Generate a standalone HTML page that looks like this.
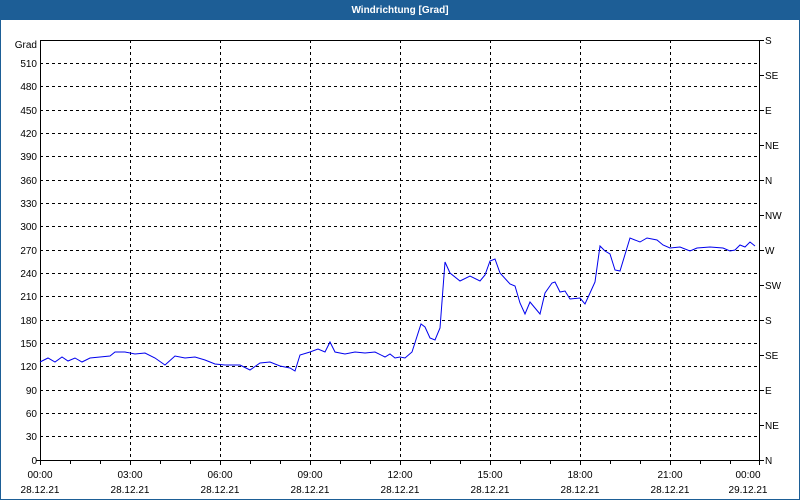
<!DOCTYPE html>
<html><head><meta charset="utf-8"><style>
html,body{margin:0;padding:0;width:800px;height:500px;overflow:hidden;background:#fff}
svg{display:block}
text{font-family:"Liberation Sans",sans-serif;font-size:10px;fill:#000}
</style></head><body>
<svg width="800" height="500" xmlns="http://www.w3.org/2000/svg">
<rect x="0" y="0" width="800" height="500" fill="#1d5e96"/>
<rect x="1" y="20" width="798" height="479" fill="#fff"/>
<text x="400" y="13" text-anchor="middle" style="font-weight:bold;fill:#fff;font-size:10px">Windrichtung [Grad]</text>
<g stroke="#000" stroke-dasharray="3,3" stroke-width="1">
<line x1="40" y1="63.5" x2="760" y2="63.5"/><line x1="40" y1="86.5" x2="760" y2="86.5"/><line x1="40" y1="110.5" x2="760" y2="110.5"/><line x1="40" y1="133.5" x2="760" y2="133.5"/><line x1="40" y1="156.5" x2="760" y2="156.5"/><line x1="40" y1="180.5" x2="760" y2="180.5"/><line x1="40" y1="203.5" x2="760" y2="203.5"/><line x1="40" y1="226.5" x2="760" y2="226.5"/><line x1="40" y1="250.5" x2="760" y2="250.5"/><line x1="40" y1="273.5" x2="760" y2="273.5"/><line x1="40" y1="296.5" x2="760" y2="296.5"/><line x1="40" y1="320.5" x2="760" y2="320.5"/><line x1="40" y1="343.5" x2="760" y2="343.5"/><line x1="40" y1="366.5" x2="760" y2="366.5"/><line x1="40" y1="390.5" x2="760" y2="390.5"/><line x1="40" y1="413.5" x2="760" y2="413.5"/><line x1="40" y1="436.5" x2="760" y2="436.5"/>
<line x1="130.5" y1="40" x2="130.5" y2="460"/><line x1="220.5" y1="40" x2="220.5" y2="460"/><line x1="310.5" y1="40" x2="310.5" y2="460"/><line x1="400.5" y1="40" x2="400.5" y2="460"/><line x1="490.5" y1="40" x2="490.5" y2="460"/><line x1="580.5" y1="40" x2="580.5" y2="460"/><line x1="670.5" y1="40" x2="670.5" y2="460"/>
</g>
<rect x="40.5" y="40.5" width="719" height="420" fill="none" stroke="#000"/>
<g stroke="#000">
<line x1="760" y1="40.5" x2="764" y2="40.5"/><line x1="760" y1="75.5" x2="764" y2="75.5"/><line x1="760" y1="110.5" x2="764" y2="110.5"/><line x1="760" y1="145.5" x2="764" y2="145.5"/><line x1="760" y1="180.5" x2="764" y2="180.5"/><line x1="760" y1="215.5" x2="764" y2="215.5"/><line x1="760" y1="250.5" x2="764" y2="250.5"/><line x1="760" y1="285.5" x2="764" y2="285.5"/><line x1="760" y1="320.5" x2="764" y2="320.5"/><line x1="760" y1="355.5" x2="764" y2="355.5"/><line x1="760" y1="390.5" x2="764" y2="390.5"/><line x1="760" y1="425.5" x2="764" y2="425.5"/><line x1="760" y1="460.5" x2="764" y2="460.5"/>
<line x1="36" y1="460.5" x2="40" y2="460.5"/>
<path d="M40.5 461v4M70.5 461v3M100.5 461v3M130.5 461v4M160.5 461v3M190.5 461v3M220.5 461v4M250.5 461v3M280.5 461v3M310.5 461v4M340.5 461v3M370.5 461v3M400.5 461v4M430.5 461v3M460.5 461v3M490.5 461v4M520.5 461v3M550.5 461v3M580.5 461v4M610.5 461v3M640.5 461v3M670.5 461v4M700.5 461v3M730.5 461v3M759.5 461v4"/>
</g>
<g text-anchor="end">
<text x="37" y="48">Grad</text>
<text x="37" y="67">510</text><text x="37" y="90">480</text><text x="37" y="114">450</text><text x="37" y="137">420</text><text x="37" y="160">390</text><text x="37" y="184">360</text><text x="37" y="207">330</text><text x="37" y="230">300</text><text x="37" y="254">270</text><text x="37" y="277">240</text><text x="37" y="300">210</text><text x="37" y="324">180</text><text x="37" y="347">150</text><text x="37" y="370">120</text><text x="37" y="394">90</text><text x="37" y="417">60</text><text x="37" y="440">30</text><text x="37" y="464">0</text>
</g>
<g>
<text x="765" y="44">S</text><text x="765" y="79">SE</text><text x="765" y="114">E</text><text x="765" y="149">NE</text><text x="765" y="184">N</text><text x="765" y="219">NW</text><text x="765" y="254">W</text><text x="765" y="289">SW</text><text x="765" y="324">S</text><text x="765" y="359">SE</text><text x="765" y="394">E</text><text x="765" y="429">NE</text><text x="765" y="464">N</text>
</g>
<g text-anchor="middle">
<text x="40" y="478">00:00</text><text x="130" y="478">03:00</text><text x="220" y="478">06:00</text><text x="310" y="478">09:00</text><text x="400" y="478">12:00</text><text x="490" y="478">15:00</text><text x="580" y="478">18:00</text><text x="670" y="478">21:00</text><text x="748" y="478">00:00</text>
<text x="40" y="493">28.12.21</text><text x="130" y="493">28.12.21</text><text x="220" y="493">28.12.21</text><text x="310" y="493">28.12.21</text><text x="400" y="493">28.12.21</text><text x="490" y="493">28.12.21</text><text x="580" y="493">28.12.21</text><text x="670" y="493">28.12.21</text><text x="748" y="493">29.12.21</text>
</g>
<polyline fill="none" stroke="#0000ee" stroke-width="1" points="40,362 48,358 55,362 62,357 68,361 75,358 82,362 90,358 100,357 110,356 115,352 125,352 135,354 145,353 155,358 165,365 175,356 185,358 195,357 205,360 215,364 225,365 240,365 250,370 260,363 270,362 280,366 290,368 295,371 300,355 310,352 318,349 325,352 330,342 335,352 345,354 355,352 365,353 375,352 385,357 390,354 395,358 400,357 405,358 412,352 421,324 425,327 430,338 435,340 440,328 445,262 450,273 460,281 470,276 480,281 485,275 490,261 495,259 500,273 510,284 515,286 520,303 525,314 530,302 540,314 545,293 552,283 555,282 560,292 565,291 570,299 580,298 585,304 590,293 595,282 600,246 605,251 610,254 615,270 620,271 630,238 640,242 647,238 657,240 663,245 670,248 680,247 690,251 697,248 710,247 723,248 730,251 735,250 740,245 745,247 750,242 755,246"/>
</svg>
</body></html>
